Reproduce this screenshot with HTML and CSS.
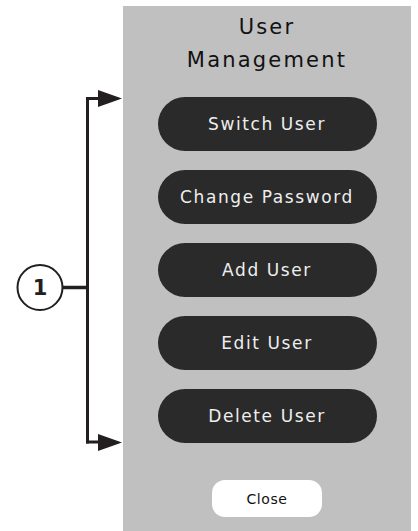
FILE: index.html
```html
<!DOCTYPE html>
<html lang="en">
<head>
    <meta charset="UTF-8">
    <meta name="viewport" content="width=device-width, initial-scale=1.0">
    <title>User Management</title>
    <link rel="stylesheet" href="styles.css">
</head>
<body>

<div class="page">
    <!-- callout bracket pointing at the button list -->
    <svg class="callout" width="123" height="525" viewBox="0 6 123 525">
        <path d="M87.5 97 V443.5" stroke="#231f20" stroke-width="3" fill="none"/>
        <path d="M86 98.5 H100" stroke="#231f20" stroke-width="3"/>
        <path d="M98 90 L122 98.5 L98 107 Z" fill="#231f20"/>
        <path d="M86 442 H100" stroke="#231f20" stroke-width="3"/>
        <path d="M98 434 L122 442.5 L98 451 Z" fill="#231f20"/>
        <path d="M62 287.5 H87" stroke="#231f20" stroke-width="3.5"/>
        <circle cx="40" cy="287.5" r="22.5" stroke="#231f20" stroke-width="2" fill="#fff"/>
        <text x="40" y="295" text-anchor="middle" class="callout-num">1</text>
    </svg>

    <section class="panel">
        <h2 class="panel-title">User<br>Management</h2>

        <div class="actions">
            <button class="action">Switch User</button>
            <button class="action">Change Password</button>
            <button class="action">Add User</button>
            <button class="action">Edit User</button>
            <button class="action">Delete User</button>
        </div>

        <button class="close">Close</button>
    </section>
</div>

</body>
</html>
```

FILE: styles.css
```css
body {
    margin: 0;
    padding: 0;
    background: #fff;
    font-family: "DejaVu Sans", sans-serif;
}
.page {
    display: flex;
    padding-top: 6px;
    height: 525px;
    width: 418px;
}
.callout {
    flex: none;
    display: block;
}
.callout-num {
    font-family: "DejaVu Sans", sans-serif;
    font-size: 21px;
    font-weight: bold;
    fill: #231f20;
}
.panel {
    width: 288px;
    background: #c0c0c0;
    display: flex;
    flex-direction: column;
    align-items: center;
    padding-top: 5px;
    box-sizing: border-box;
}
.panel-title {
    margin: 0;
    font-size: 21px;
    font-weight: normal;
    letter-spacing: 2.2px;
    line-height: 33px;
    text-align: center;
    color: #111;
}
.actions {
    display: flex;
    flex-direction: column;
    gap: 19px;
    margin-top: 20px;
}
.action {
    width: 219px;
    height: 54px;
    border: none;
    border-radius: 27px;
    background: #2a2a2a;
    color: #eeeeee;
    font-family: "DejaVu Sans", sans-serif;
    font-size: 17px;
    letter-spacing: 1.6px;
    padding: 0;
}
.close {
    margin-top: 37px;
    width: 110px;
    height: 37px;
    border: none;
    border-radius: 13px;
    background: #fff;
    color: #111;
    font-family: "DejaVu Sans", sans-serif;
    font-size: 14px;
    letter-spacing: 0.6px;
    padding: 0;
}
```
